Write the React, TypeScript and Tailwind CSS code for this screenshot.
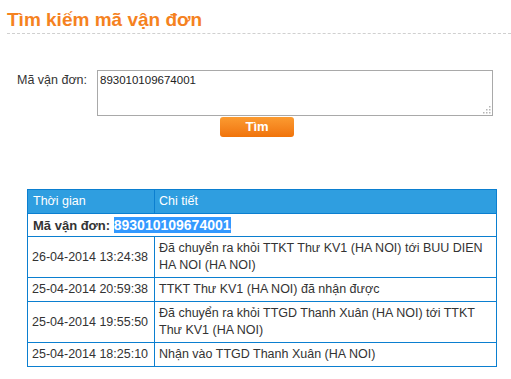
import React from "react";

const rows: { time: string; detail: string }[] = [
  { time: "26-04-2014 13:24:38", detail: "Đã chuyển ra khỏi TTKT Thư KV1 (HA NOI) tới BUU DIEN HA NOI (HA NOI)" },
  { time: "25-04-2014 20:59:38", detail: "TTKT Thư KV1 (HA NOI) đã nhận được" },
  { time: "25-04-2014 19:55:50", detail: "Đã chuyển ra khỏi TTGD Thanh Xuân (HA NOI) tới TTKT Thư KV1 (HA NOI)" },
  { time: "25-04-2014 18:25:10", detail: "Nhận vào TTGD Thanh Xuân (HA NOI)" },
];

export default function App() {
  return (
    <div
      className="w-[511px] h-[379px] bg-white overflow-hidden text-[#333]"
      style={{ fontFamily: '"Liberation Sans", Arial, sans-serif' }}
    >
      <div className="pl-[7px] pt-[9px]">
        <h1 className="text-[19px] leading-[22px] font-bold text-[#f5821f] h-[25px] border-b border-dashed border-[#d0d0d0]">
          Tìm kiếm mã vận đơn
        </h1>
      </div>
      <div className="flex pt-[36px] pl-[17px]">
        <label className="w-[80px] text-[12.5px] leading-[15px] pt-[3px]">Mã vận đơn:</label>
        <div className="relative w-[396px] h-[46px] border border-[#a9a9a9] bg-white">
          <div className="pl-[2px] pt-[2px] text-[11.5px] leading-[14px] text-[#222]">893010109674001</div>
          <svg className="absolute right-[1px] bottom-[1px]" width="9" height="9" viewBox="0 0 9 9">
            <rect x="7" y="1" width="1.5" height="1.5" fill="#b5b5b5" />
            <rect x="4" y="4" width="1.5" height="1.5" fill="#b5b5b5" />
            <rect x="7" y="4" width="1.5" height="1.5" fill="#b5b5b5" />
            <rect x="1" y="7" width="1.5" height="1.5" fill="#b5b5b5" />
            <rect x="4" y="7" width="1.5" height="1.5" fill="#b5b5b5" />
            <rect x="7" y="7" width="1.5" height="1.5" fill="#b5b5b5" />
          </svg>
        </div>
      </div>
      <div className="flex pl-[220px] pt-[1px]">
        <button className="block w-[74px] h-[20px] rounded-[3px] bg-gradient-to-b from-[#fb9b30] to-[#f07308] text-white font-bold text-[13px] leading-[20px]">
          Tìm
        </button>
      </div>
      <div className="pl-[27px] pt-[52px]">
        <table className="w-[470px] border-collapse border border-[#0b7fd0] text-[12.5px] leading-[17px] text-[#333]">
          <colgroup>
            <col className="w-[127px]" />
            <col />
          </colgroup>
          <thead>
            <tr className="bg-[#2f9ee0] text-white h-[24px]">
              <th className="font-normal text-left pl-[5px] border border-[#0b7fd0]">Thời gian</th>
              <th className="font-normal text-left pl-[4px] border border-[#0b7fd0]">Chi tiết</th>
            </tr>
          </thead>
          <tbody>
            <tr className="h-[23px]">
              <td colSpan={2} className="pl-[5px] border border-[#0b7fd0] font-bold text-[13px] leading-[17px]">
                Mã vận đơn: <span className="bg-[#3399ff] text-white text-[14px]">893010109674001</span>
              </td>
            </tr>
            {rows.map((r) => (
              <tr key={r.time}>
                <td className="pl-[4px] py-[3px] border border-[#0b7fd0] whitespace-nowrap">{r.time}</td>
                <td className="pl-[4px] pr-[4px] py-[3px] border border-[#0b7fd0]">{r.detail}</td>
              </tr>
            ))}
          </tbody>
        </table>
      </div>
    </div>
  );
}
